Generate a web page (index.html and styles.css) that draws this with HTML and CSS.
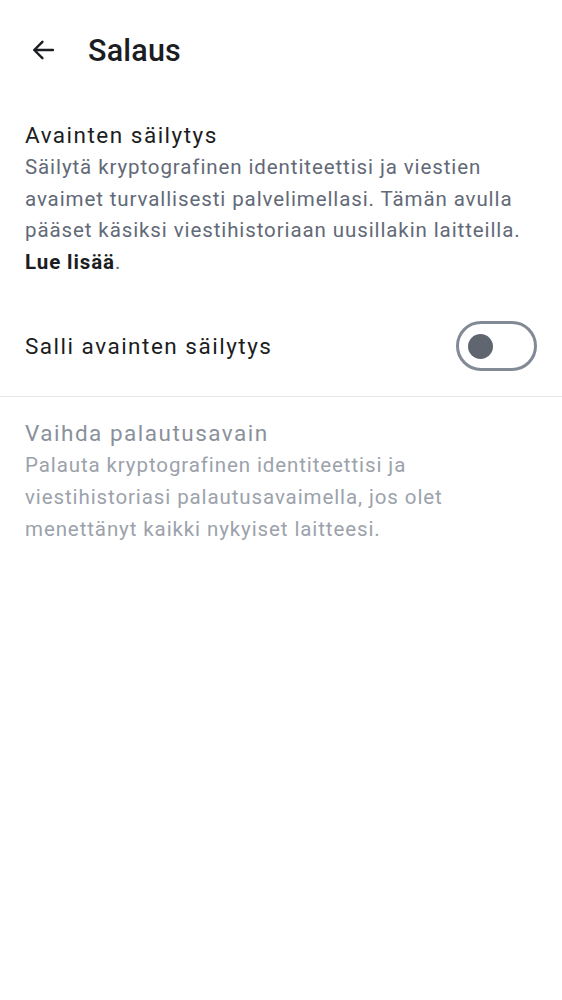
FILE: index.html
```html
<!DOCTYPE html>
<html lang="fi">
<head>
<meta charset="utf-8">
<link rel="stylesheet" href="styles.css">
</head>
<body>
<header class="topbar">
  <button class="back" aria-label="Takaisin">
    <svg width="28" height="28" viewBox="0 0 24 24"><path d="M20.5 12H4.5M11.5 5l-7 7 7 7" fill="none" stroke="#1b1d22" stroke-width="2.1" stroke-linecap="round" stroke-linejoin="round"/></svg>
  </button>
  <h1 class="title">Salaus</h1>
</header>
<section class="block">
  <h2 class="block-title">Avainten säilytys</h2>
  <p class="block-text">Säilytä kryptografinen identiteettisi ja viestien avaimet turvallisesti palvelimellasi. Tämän avulla pääset käsiksi viestihistoriaan uusillakin laitteilla. <a class="more">Lue lisää</a>.</p>
</section>
<div class="row">
  <span class="row-label">Salli avainten säilytys</span>
  <span class="switch"><span class="knob"></span></span>
</div>
<hr class="divider">
<section class="block block-disabled">
  <h2 class="block-title">Vaihda palautusavain</h2>
  <p class="block-text">Palauta kryptografinen identiteettisi ja viestihistoriasi palautusavaimella, jos olet menettänyt kaikki nykyiset laitteesi.</p>
</section>
</body>
</html>
```
FILE: styles.css
```css
html, body {
  margin: 0;
  padding: 0;
  background: #ffffff;
}
body {
  font-family: Roboto, "Noto Sans", sans-serif;
  color: #1b1d22;
  width: 562px;
}
.topbar {
  display: flex;
  align-items: center;
  height: 100px;
  padding-left: 29px;
  box-sizing: border-box;
}
.back {
  border: 0;
  background: none;
  padding: 0;
  width: 28px;
  height: 28px;
  display: flex;
  align-items: center;
  justify-content: center;
  margin-right: 31px;
}
.title {
  margin: 0;
  font-size: 30.5px;
  font-weight: 500;
  letter-spacing: 0.2px;
}
.block {
  padding: 18px 25px 0 25px;
}
.block-title {
  margin: 0;
  font-size: 22.5px;
  font-weight: 400;
  line-height: 34px;
  letter-spacing: 1.5px;
  color: #1b1d22;
}
.block-text {
  margin: 0;
  font-size: 20.5px;
  line-height: 31.6px;
  letter-spacing: 0.9px;
  color: #626977;
}
.more {
  color: #1b1d22;
  font-weight: 700;
}
.row {
  display: flex;
  align-items: center;
  justify-content: space-between;
  padding: 43px 25px 25px 25px;
}
.row-label {
  font-size: 22.5px;
  letter-spacing: 1.5px;
  color: #1b1d22;
}
.switch {
  width: 81px;
  height: 50px;
  box-sizing: border-box;
  border: 3px solid #818a95;
  border-radius: 25px;
  display: flex;
  align-items: center;
  padding-left: 9px;
}
.knob {
  width: 25px;
  height: 25px;
  border-radius: 50%;
  background: #5f6670;
}
.divider {
  margin: 0;
  border: 0;
  height: 1px;
  background: #e8e9eb;
}
.block-disabled {
  padding-top: 19px;
}
.block-disabled .block-title {
  color: #8a919b;
}
.block-disabled .block-text {
  color: #9ca2ab;
}
```
